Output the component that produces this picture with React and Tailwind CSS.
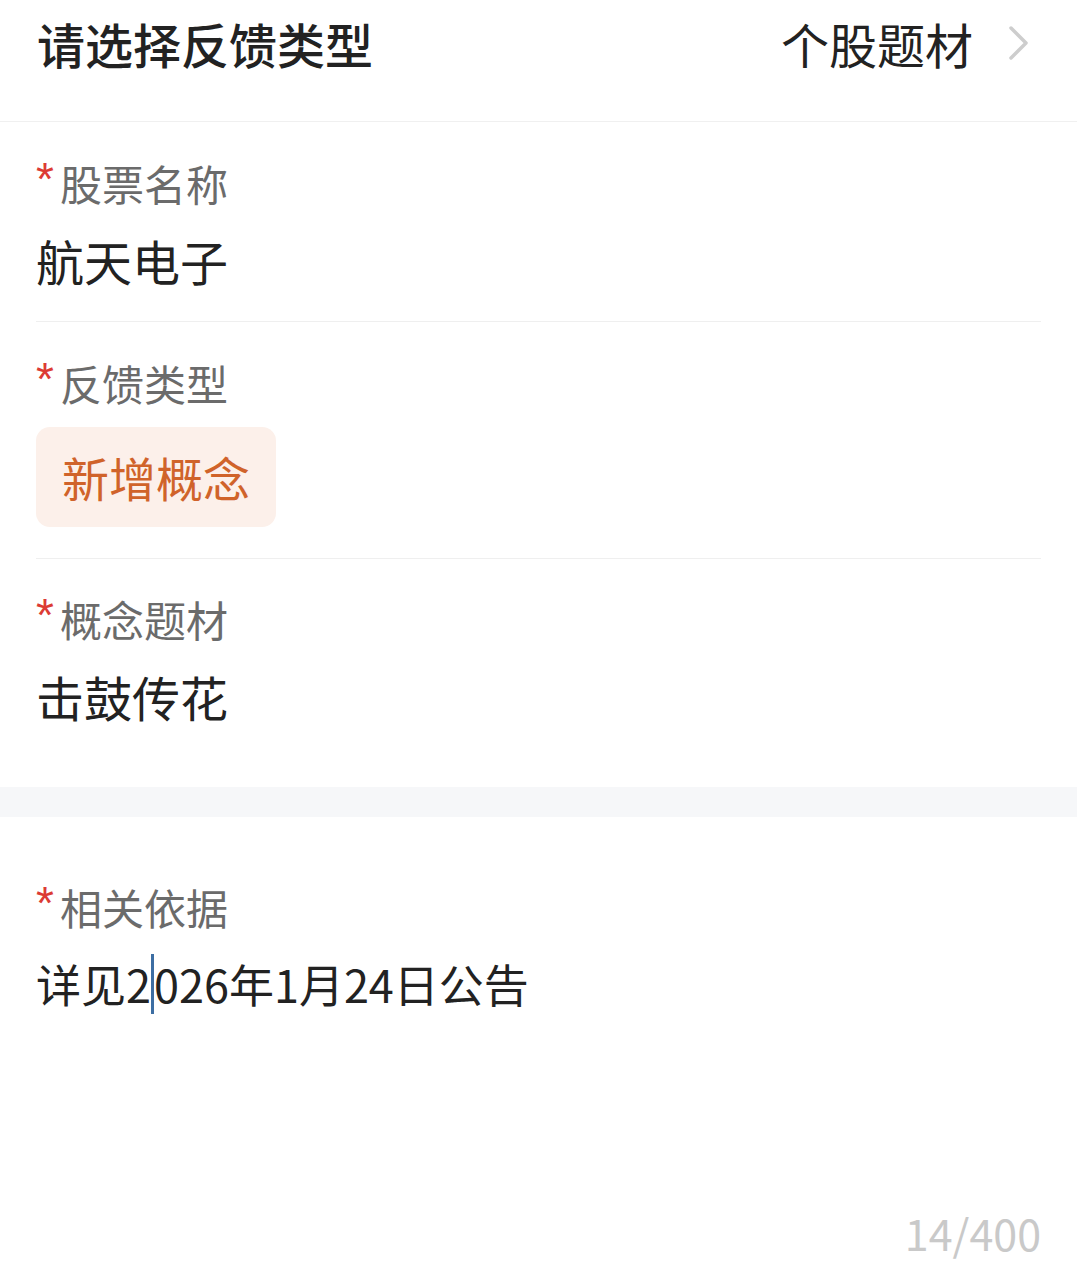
import React from 'react';

const font = { fontFamily: '"Noto Sans CJK SC", "Noto Sans", sans-serif' };

const Label = ({ children }) => (
  <div className="flex items-center text-[42px] leading-[60px] text-[#6b6b6b]">
    <span
      className="text-[#dc3b34] text-[46px] leading-none w-[24px] -mt-[8px]"
      style={{ fontFamily: '"Liberation Sans", sans-serif' }}
    >
      *
    </span>
    <span>{children}</span>
  </div>
);

export default function App() {
  return (
    <div className="w-[1077px] h-[1284px] bg-white overflow-hidden" style={font}>
      {/* header */}
      <div className="h-[122px] flex items-start justify-between pl-[37px] pr-[46px] pt-[13px] border-b border-[#f0f0f0]">
        <div className="text-[48px] leading-[60px] font-medium text-[#222]">请选择反馈类型</div>
        <div className="flex items-center">
          <span className="text-[48px] leading-[60px] text-[#222]">个股题材</span>
          <svg width="24" height="36" viewBox="0 0 24 36" className="ml-[34px]">
            <polyline points="4,3 19,18 4,33" fill="none" stroke="#cdcdcd" strokeWidth="3.5" strokeLinecap="round" strokeLinejoin="round" />
          </svg>
        </div>
      </div>

      <div className="px-[36px]">
        <div className="pt-[31px] pb-[31px] border-b border-[#efefef]">
          <Label>股票名称</Label>
          <div className="mt-[17px] text-[48px] leading-[60px] text-[#222]">航天电子</div>
        </div>

        <div className="pt-[31px] pb-[31px] border-b border-[#efefef]">
          <Label>反馈类型</Label>
          <div className="mt-[14px] w-[240px] h-[100px] rounded-[14px] bg-[#fcf0ea] flex items-center justify-center text-[47px] text-[#d0632a]">
            新增概念
          </div>
        </div>

        <div className="pt-[30px] pb-[61px]">
          <Label>概念题材</Label>
          <div className="mt-[17px] text-[48px] leading-[60px] text-[#222]">击鼓传花</div>
        </div>
      </div>

      <div className="h-[30px] bg-[#f6f7f9]" />

      <div className="px-[36px] pt-[60px]">
        <Label>相关依据</Label>
        <div className="mt-[17px] text-[45px] leading-[60px] text-[#222] flex items-center">
          <span>详见2</span>
          <span className="inline-block w-[3px] h-[60px] bg-[#3d6ea3]" />
          <span>026年1月24日公告</span>
        </div>
        <div className="mt-[188px] text-right text-[43px] leading-[60px] text-[#c9c9c9]">14/400</div>
      </div>
    </div>
  );
}
